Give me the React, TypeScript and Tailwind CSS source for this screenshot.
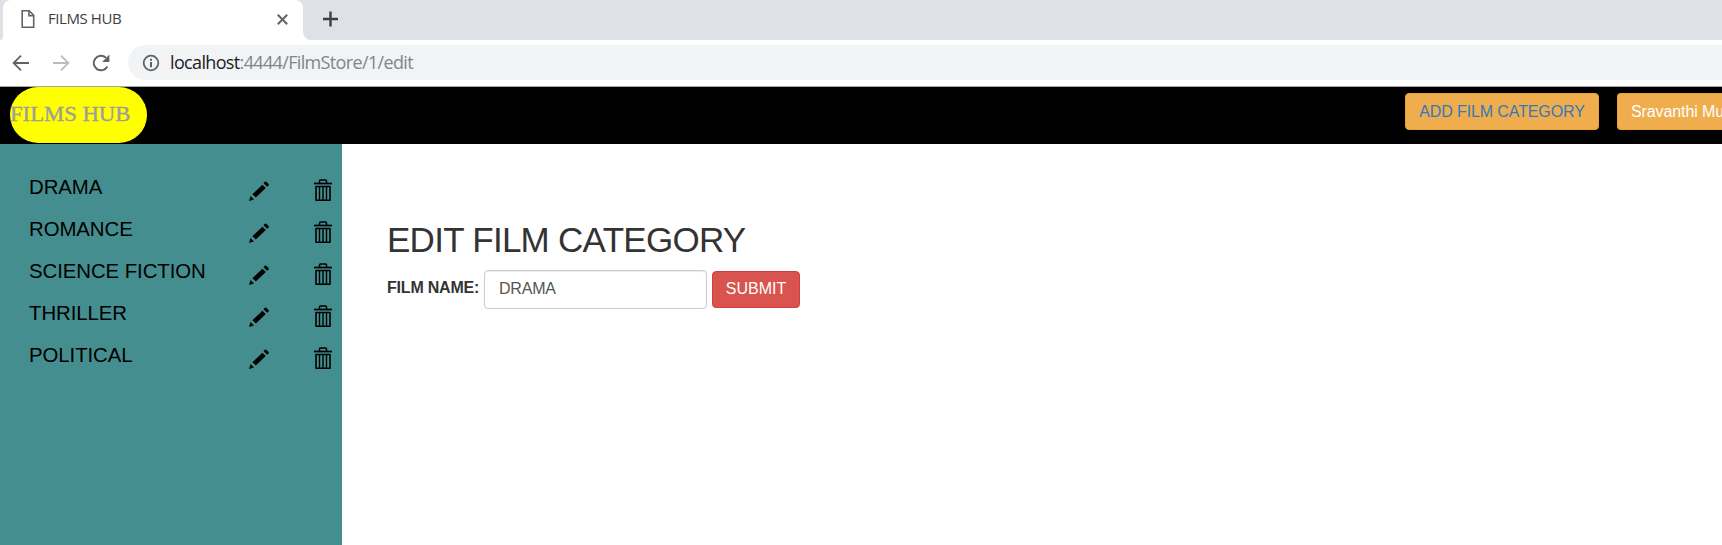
import React from "react";

const films = ["DRAMA", "ROMANCE", "SCIENCE FICTION", "THRILLER", "POLITICAL"];

function Pencil() {
  return (
    <svg className="h-[22px] w-[22px]" viewBox="0 0 22 22" fill="#000">
      <path d="M1 21 2.6 16 6 19.4Z" />
      <path d="M4.4 14.2 14.4 4.7 17.8 8.1 7.8 17.6Z" />
      <path d="M15.5 3.2 16.9 1.8Q17.6 1.2 18.3 1.8L20.6 4.1Q21.2 4.8 20.6 5.4L19.2 6.8Z" />
    </svg>
  );
}

function Trash() {
  return (
    <svg className="h-[24px] w-[20px]" viewBox="0 0 20 24" fill="none" stroke="#000">
      <path d="M1 5.5H19" strokeWidth="1.7" />
      <path d="M6.5 5V3Q6.5 2 7.5 2H12.5Q13.5 2 13.5 3V5" strokeWidth="1.5" />
      <path d="M3 8.5H17V22.3H3Z" strokeWidth="1.6" strokeLinejoin="round" />
      <path d="M6.5 8.5V22M10 8.5V22M13.5 8.5V22" strokeWidth="1.4" />
    </svg>
  );
}

function BrowserChrome() {
  return (
    <header className="flex h-[87px] flex-col border-b border-[#a9a9ad] bg-white text-[#3c4043]">
      <div className="flex h-10 bg-[#dee1e6]">
        <div className="w-[3px] bg-white">
          <div className="h-10 rounded-br-lg bg-[#dee1e6]" />
        </div>
        <div className="flex w-[300px] items-start rounded-t-lg bg-white pt-2">
          <svg className="mt-[2px] ml-[18px] h-[18px] w-[14px] shrink-0" viewBox="0 0 14 18" fill="none" stroke="#5f6368" strokeWidth="1.6">
            <path d="M1.2 .8H8.2L12.7 5.3V17.2H1.2Z" />
            <path d="M8 .8V5.6H12.7" />
          </svg>
          <span className="ml-[13px] w-[190px] shrink-0 whitespace-nowrap font-['Open_Sans',sans-serif] text-[15px] leading-[21px] tracking-[-0.42px]">FILMS HUB</span>
          <svg className="mt-[6px] ml-[39px] h-[11px] w-[11px] shrink-0" viewBox="0 0 11 11" stroke="#5f6368" strokeWidth="2">
            <path d="M.8 .8 10.2 10.2M10.2 .8 .8 10.2" />
          </svg>
        </div>
        <div className="flex-1 bg-white">
          <div className="h-10 rounded-bl-lg bg-[#dee1e6] pt-[11px] pl-5">
            <svg className="h-[16px] w-[16px]" viewBox="0 0 16 16" stroke="#3c4043" strokeWidth="2.4">
              <path d="M0 8H15M7.5 .5V15.5" />
            </svg>
          </div>
        </div>
      </div>
      <div className="flex h-[46px] pt-[5px]">
        <div className="flex h-[35px] w-[128px] items-center pl-[12px]">
          <svg className="h-[18px] w-[18px]" viewBox="0 0 18 18" fill="none" stroke="#5f6368" strokeWidth="1.8">
            <path d="M17 9H1.8M9 1.6 1.6 9 9 16.4" />
          </svg>
          <svg className="ml-[22px] h-[18px] w-[18px]" viewBox="0 0 18 18" fill="none" stroke="#babcbe" strokeWidth="1.8">
            <path d="M1 9H16.2M9 1.6 16.4 9 9 16.4" />
          </svg>
          <svg className="ml-[21px] h-[18px] w-[20px]" viewBox="0 0 20 18" fill="none" stroke="#5f6368" strokeWidth="2">
            <path d="M16.4 12.6A7.3 7.3 0 1 1 15 3.7" />
            <path d="M18.4 .6V8H11.2Z" fill="#5f6368" stroke="none" />
          </svg>
        </div>
        <div className="flex h-[35px] flex-1 items-center rounded-l-full bg-[#f1f3f4] pl-[14px]">
          <svg className="h-[18px] w-[18px]" viewBox="0 0 18 18" fill="none" stroke="#5f6368" strokeWidth="1.8">
            <circle cx="9" cy="9" r="7.3" />
            <path d="M9 8V13.2M9 4.8V6.7" strokeWidth="2" />
          </svg>
          <span className="ml-[10px] whitespace-nowrap font-['Open_Sans',sans-serif] text-[18px] tracking-[-0.65px] text-[#80868b]">
            <span className="text-[#202124]">localhost</span>:4444/FilmStore/1/edit
          </span>
        </div>
      </div>
    </header>
  );
}

export default function App() {
  return (
    <div className="flex h-[545px] w-[1722px] flex-col overflow-hidden bg-white font-['Liberation_Sans',sans-serif]">
      <BrowserChrome />
      <nav className="flex h-[57px] shrink-0 justify-between bg-black pl-[10px]">
        <div className="flex h-[56px] w-[137px] items-center rounded-[28px] bg-[#ffff00]">
          <span className="origin-left scale-x-[1.08] whitespace-nowrap font-['Liberation_Serif',serif] text-[21px] text-[#9d9d9d] [-webkit-text-stroke:0.35px_#9d9d9d]">FILMS HUB</span>
        </div>
        <div className="flex w-[317px] gap-[18px] pt-[6px] text-[16px]">
          <button className="h-[37px] w-[194px] shrink-0 rounded-[4px] border border-[#eea236] bg-[#f0ad4e] tracking-[-0.12px] whitespace-nowrap text-[#337ab7]">ADD FILM CATEGORY</button>
          <button className="h-[37px] w-[105px] shrink-0 rounded-l-[4px] border border-r-0 border-[#eea236] bg-[#f0ad4e] pl-[13px] text-left tracking-[-0.1px] whitespace-nowrap text-white">Sravanthi Mu</button>
        </div>
      </nav>
      <div className="flex flex-1">
        <aside className="w-[342px] shrink-0 bg-[#448e8f] pt-[22px]">
          {films.map((film) => (
            <div key={film} className="flex h-[42px] items-center pl-[29px] text-[20.4px] tracking-[-0.08px] text-black">
              <span className="w-[219px] shrink-0 whitespace-nowrap">{film}</span>
              <span className="mt-[7px]"><Pencil /></span>
              <span className="mt-[6px] ml-[43px]"><Trash /></span>
            </div>
          ))}
        </aside>
        <main className="flex-1 pt-[75px] pl-[45px] text-[#333]">
          <h1 className="text-[35px] leading-[42px] tracking-[-0.72px] whitespace-nowrap">EDIT FILM CATEGORY</h1>
          <form className="mt-[9px] flex items-start text-[16px]" onSubmit={(e) => e.preventDefault()}>
            <label htmlFor="film" className="w-[97px] shrink-0 pt-[6px] font-bold tracking-[-0.2px] whitespace-nowrap">FILM NAME:</label>
            <input id="film" defaultValue="DRAMA" className="h-[39px] w-[223px] rounded-[4px] border border-[#ccc] bg-white px-[14px] pb-[2px] tracking-[-0.2px] text-[#555] shadow-[inset_0_1px_1px_rgba(0,0,0,.075)]" />
            <button className="mt-px ml-[5px] h-[37px] w-[88px] rounded-[4px] border border-[#d43f3a] bg-[#d9534f] pb-px text-white">SUBMIT</button>
          </form>
        </main>
      </div>
    </div>
  );
}
